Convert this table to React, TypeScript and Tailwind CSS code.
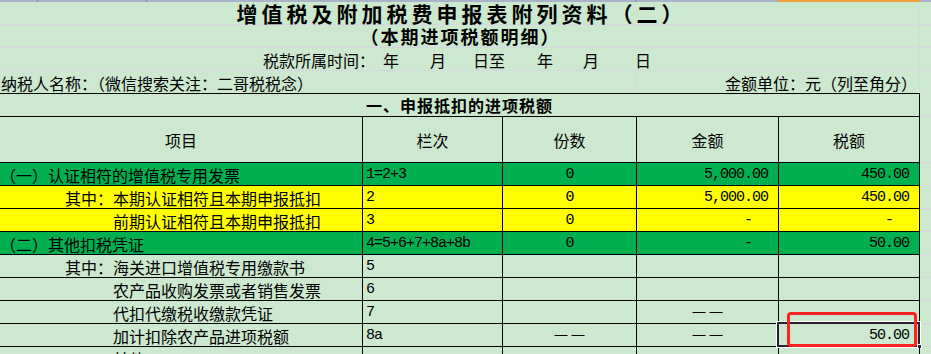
import React from "react"

type Fill = "green" | "yellow" | "plain"

interface Line {
  item: string
  pad: string
  code: string
  count: string
  amount: string
  tax: string
  fill: Fill
  picked?: boolean
}

const lines: Line[] = [
  { item: "（一）认证相符的增值税专用发票", pad: "pl-0", code: "1=2+3", count: "0", amount: "5,000.00", tax: "450.00", fill: "green" },
  { item: "其中：本期认证相符且本期申报抵扣", pad: "pl-[65px]", code: "2", count: "0", amount: "5,000.00", tax: "450.00", fill: "yellow" },
  { item: "前期认证相符且本期申报抵扣", pad: "pl-[113px]", code: "3", count: "0", amount: "-", tax: "-", fill: "yellow" },
  { item: "（二）其他扣税凭证", pad: "pl-0", code: "4=5+6+7+8a+8b", count: "0", amount: "-", tax: "50.00", fill: "green" },
  { item: "其中：海关进口增值税专用缴款书", pad: "pl-[65px]", code: "5", count: "", amount: "", tax: "", fill: "plain" },
  { item: "农产品收购发票或者销售发票", pad: "pl-[113px]", code: "6", count: "", amount: "", tax: "", fill: "plain" },
  { item: "代扣代缴税收缴款凭证", pad: "pl-[113px]", code: "7", count: "", amount: "——", tax: "", fill: "plain" },
  { item: "加计扣除农产品进项税额", pad: "pl-[113px]", code: "8a", count: "——", amount: "——", tax: "50.00", fill: "plain", picked: true },
  { item: "其他", pad: "pl-[113px]", code: "", count: "", amount: "", tax: "", fill: "plain" },
]

const fillClass: Record<Fill, string> = {
  green: "bg-[#00b050]",
  yellow: "bg-[#ffff00]",
  plain: "",
}

const mono = "font-['Liberation_Mono',monospace] text-[15px] tracking-[-1px]"
const cell = "flex items-center h-full border-r border-b border-black"

function Value({ v }: { v: string }) {
  if (!v) return null
  if (v === "——") {
    return (
      <span className="w-full text-center font-['Liberation_Sans',sans-serif] text-[13px] tracking-[4px] pl-[4px] pb-[2px]">
        ——
      </span>
    )
  }
  if (v === "-") {
    return <span className={`ml-auto pr-[26px] ${mono}`}>-</span>
  }
  if (v === "0") {
    return <span className={`w-full text-center ${mono}`}>0</span>
  }
  return <span className={`ml-auto pr-[10px] ${mono}`}>{v}</span>
}

function DataRow({ line }: { line: Line }) {
  const bg = fillClass[line.fill]
  return (
    <div className="grid grid-cols-[363px_140px_134px_142px_141px_1fr] h-[23px]">
      <div className={`${cell} ${bg} ${line.pad} text-[16px] pt-[1px]`}>{line.item}</div>
      <div className={`${cell} ${bg} pl-[3px] pt-[1px] ${mono}`}>{line.code}</div>
      <div className={`${cell} ${bg} pt-[1px]`}>
        <Value v={line.count} />
      </div>
      <div className={`${cell} ${bg} pt-[1px]`}>
        <Value v={line.amount} />
      </div>
      <div className={`${cell} ${bg} pt-[1px] relative`}>
        <Value v={line.tax} />
        {line.picked && (
          <>
            {/* selected cell outline */}
            <div className="absolute -left-[2px] -top-[2px] -right-[1px] -bottom-[1px] border-2 border-[#2a1f2e] outline outline-1 outline-white" />
            <div className="absolute -right-[3px] -bottom-[3px] w-[5px] h-[5px] bg-[#2a1f2e] border border-white" />
            {/* red mark */}
            <div className="absolute left-[8px] -top-[12px] w-[130px] h-[35px] border-[3px] border-[#ff2222] rounded-[4px] z-10" />
          </>
        )}
      </div>
      <div className="h-full border-b border-[#d4d8e0]" />
    </div>
  )
}

export default function App() {
  return (
    <div className="w-[931px] h-[354px] overflow-hidden bg-[#cce8cf] text-black font-['Noto_Sans_CJK_SC',sans-serif] leading-none">
      {/* column header edge */}
      <div className="flex h-[2px] bg-[#a9b4ca]">
        <div className="w-[38px] border-r border-[#7f8fae]" />
        <div className="w-[109px] border-r border-[#7f8fae]" />
        <div className="w-[489px] border-r border-[#7f8fae]" />
        <div className="w-[142px]" />
        <div className="w-[142px] bg-[#f0a33c]" />
        <div className="flex-1" />
      </div>

      {/* title */}
      <div className="grid grid-cols-[920px_1fr] h-[23px]">
        <div className="flex items-center justify-center h-full border-r border-b border-[#d4d8e0] text-[21px] font-bold tracking-[4px] pl-[4px]">
          增值税及附加税费申报表附列资料（二）
        </div>
        <div className="border-b border-[#d4d8e0]" />
      </div>
      <div className="grid grid-cols-[920px_1fr] h-[23px]">
        <div className="flex items-center justify-center h-full border-r border-b border-[#d4d8e0] text-[18px] font-bold tracking-[2px] pl-[2px]">
          （本期进项税额明细）
        </div>
        <div className="border-b border-[#d4d8e0]" />
      </div>
      <div className="grid grid-cols-[920px_1fr] h-[23px]">
        <div className="flex items-center h-full border-r border-b border-[#d4d8e0] text-[16px] pl-[263px] pt-[1px]">
          <span>税款所属时间：</span>
          <span className="ml-[8px]">年</span>
          <span className="ml-[31px]">月</span>
          <span className="ml-[27px]">日至</span>
          <span className="ml-[32px]">年</span>
          <span className="ml-[30px]">月</span>
          <span className="ml-[36px]">日</span>
        </div>
        <div className="border-b border-[#d4d8e0]" />
      </div>
      <div className="grid grid-cols-[636px_284px_1fr] h-[22px] text-[16px]">
        <div className="flex items-center h-full border-r border-[#d4d8e0] pl-[1px] pt-[1px]">
          纳税人名称：（微信搜索关注：二哥税税念）
        </div>
        <div className="flex items-center justify-end h-full border-r border-[#d4d8e0] pr-[2px] pt-[1px]">
          金额单位：元（列至角分）
        </div>
        <div />
      </div>

      {/* table */}
      <div className="grid grid-cols-[920px_1fr] h-[24px]">
        <div className="flex items-center justify-center h-full border-t border-r border-b border-black text-[16px] font-bold tracking-[1px]">
          一、申报抵扣的进项税额
        </div>
        <div className="border-b border-[#d4d8e0]" />
      </div>
      <div className="grid grid-cols-[363px_140px_134px_142px_141px_1fr] h-[46px] text-[16px]">
        <div className={`${cell} justify-center`}>项目</div>
        <div className={`${cell} justify-center`}>栏次</div>
        <div className={`${cell} justify-center`}>份数</div>
        <div className={`${cell} justify-center`}>金额</div>
        <div className={`${cell} justify-center`}>税额</div>
        <div className="h-full border-b border-[#d4d8e0]" />
      </div>
      {lines.map((line, i) => (
        <DataRow key={i} line={line} />
      ))}
    </div>
  )
}
